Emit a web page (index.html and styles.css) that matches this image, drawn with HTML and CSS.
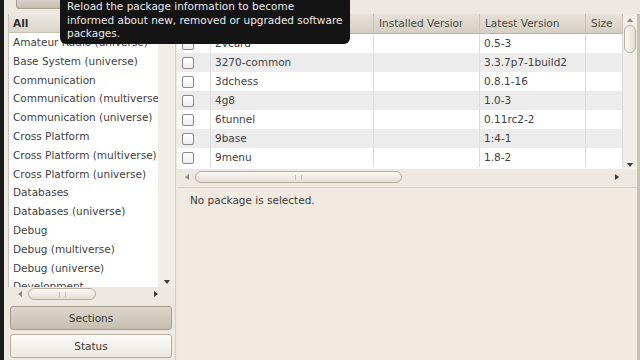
FILE: index.html
```html
<!DOCTYPE html>
<html lang="en">
<head>
    <meta charset="UTF-8">
    <title>Synaptic Package Manager</title>
    <link rel="stylesheet" href="styles.css">
</head>
<body>
    <div class="edge"></div>

    <div class="content">
        <div class="toolbar">
            <div class="tool-button"></div>
        </div>

        <div class="panes">
            <!-- левая панель: разделы -->
            <div class="left">
                <div class="section-box">
                    <div class="section-top">
                        <div class="section-list">
                            <div class="list-head">All</div>
                            <div class="list-row">Amateur Radio (universe)</div>
                            <div class="list-row">Base System (universe)</div>
                            <div class="list-row">Communication</div>
                            <div class="list-row">Communication (multiverse)</div>
                            <div class="list-row">Communication (universe)</div>
                            <div class="list-row">Cross Platform</div>
                            <div class="list-row">Cross Platform (multiverse)</div>
                            <div class="list-row">Cross Platform (universe)</div>
                            <div class="list-row">Databases</div>
                            <div class="list-row">Databases (universe)</div>
                            <div class="list-row">Debug</div>
                            <div class="list-row">Debug (multiverse)</div>
                            <div class="list-row">Debug (universe)</div>
                            <div class="list-row">Development</div>
                        </div>
                        <div class="vscroll left-vscroll">
                            <div class="vthumb"></div>
                            <span class="arrow-down"></span>
                        </div>
                    </div>
                    <div class="hscroll left-hscroll">
                        <span class="arrow-left"></span>
                        <div class="hthumb left-hthumb"><span class="grip"></span></div>
                        <span class="arrow-right"></span>
                    </div>
                </div>
                <button class="side-button pressed">Sections</button>
                <button class="side-button">Status</button>
            </div>

            <!-- правая панель: пакеты -->
            <div class="right">
                <div class="pkg-box">
                    <div class="pkg-table">
                        <div class="pkg-head">
                            <div class="hcell"></div>
                            <div class="hcell"><span class="hlabel">Package</span></div>
                            <div class="hcell"><span class="hlabel">Installed Version</span></div>
                            <div class="hcell"><span class="hlabel">Latest Version</span></div>
                            <div class="hcell"><span class="hlabel">Size</span></div>
                        </div>
                        <div class="pkg-row">
                            <div class="cell"><span class="check"></span></div>
                            <div class="cell">2vcard</div>
                            <div class="cell"></div>
                            <div class="cell">0.5-3</div>
                            <div class="cell"></div>
                        </div>
                        <div class="pkg-row odd">
                            <div class="cell"><span class="check"></span></div>
                            <div class="cell">3270-common</div>
                            <div class="cell"></div>
                            <div class="cell">3.3.7p7-1build2</div>
                            <div class="cell"></div>
                        </div>
                        <div class="pkg-row">
                            <div class="cell"><span class="check"></span></div>
                            <div class="cell">3dchess</div>
                            <div class="cell"></div>
                            <div class="cell">0.8.1-16</div>
                            <div class="cell"></div>
                        </div>
                        <div class="pkg-row odd">
                            <div class="cell"><span class="check"></span></div>
                            <div class="cell">4g8</div>
                            <div class="cell"></div>
                            <div class="cell">1.0-3</div>
                            <div class="cell"></div>
                        </div>
                        <div class="pkg-row">
                            <div class="cell"><span class="check"></span></div>
                            <div class="cell">6tunnel</div>
                            <div class="cell"></div>
                            <div class="cell">0.11rc2-2</div>
                            <div class="cell"></div>
                        </div>
                        <div class="pkg-row odd">
                            <div class="cell"><span class="check"></span></div>
                            <div class="cell">9base</div>
                            <div class="cell"></div>
                            <div class="cell">1:4-1</div>
                            <div class="cell"></div>
                        </div>
                        <div class="pkg-row">
                            <div class="cell"><span class="check"></span></div>
                            <div class="cell">9menu</div>
                            <div class="cell"></div>
                            <div class="cell">1.8-2</div>
                            <div class="cell"></div>
                        </div>
                    </div>
                    <div class="vscroll pkg-vscroll">
                        <span class="arrow-up"></span>
                        <div class="vthumb"></div>
                        <span class="arrow-down"></span>
                    </div>
                </div>
                <div class="hscroll pkg-hscroll">
                    <span class="arrow-left"></span>
                    <div class="hthumb pkg-hthumb"><span class="grip"></span></div>
                    <span class="arrow-right"></span>
                </div>
                <div class="details">No package is selected.</div>
            </div>

            <div class="right-edge"></div>
        </div>
    </div>

    <!-- подсказка поверх окна -->
    <div class="tooltip">Reload the package information to become<br>informed about new, removed or upgraded software<br>packages.</div>
</body>
</html>
```

FILE: styles.css
```css
body {
    margin: 0;
    width: 640px;
    height: 360px;
    overflow: hidden;
    display: flex;
    background: #ede8e0;
    font-family: "DejaVu Sans", sans-serif;
    font-size: 10.5px;
    color: #3f3f3f;
    position: relative;
}
.edge {
    width: 4px;
    flex-shrink: 0;
    background: #1c1b19;
}
.content {
    flex: 1;
    min-width: 0;
    display: flex;
    flex-direction: column;
}
.toolbar {
    height: 14px;
    padding-left: 12px;
}
.tool-button {
    width: 52px;
    height: 8px;
    background: linear-gradient(#d8d2c7, #c4bdb0);
    border: 1px solid #a9a192;
    border-top: none;
    border-radius: 0 0 3px 3px;
}
.panes {
    flex: 1;
    display: flex;
}
.left {
    width: 167px;
    flex-shrink: 0;
    padding-left: 4px;
    display: flex;
    flex-direction: column;
    border-right: 1px solid #d6cfc3;
}
.section-box {
    display: flex;
    flex-direction: column;
    height: 287px;
}
.section-top {
    flex: 1;
    display: flex;
    overflow: hidden;
}
.section-list {
    width: 149px;
    flex-shrink: 0;
    background: #fff;
    overflow: hidden;
    border-left: 1px solid #c9c2b6;
}
.list-head {
    height: 18px;
    line-height: 18px;
    padding-left: 4px;
    font-weight: bold;
    color: #2e2e2e;
    background: linear-gradient(#ece8e1, #dcd6cb);
    border-bottom: 1px solid #c9c2b5;
}
.list-row {
    height: 18.8px;
    line-height: 18.8px;
    padding-left: 4px;
    white-space: nowrap;
}
.vscroll {
    width: 15px;
    flex-shrink: 0;
    background: #f1ede7;
    display: flex;
    flex-direction: column;
    align-items: center;
}
.left-vscroll {
    width: 17px;
    padding-top: 3px;
}
.vthumb {
    width: 10px;
    height: 22px;
    border: 1px solid #b7ae9f;
    border-radius: 6px;
    background: linear-gradient(90deg, #fbf9f6, #e4ded3);
}
.arrow-down,
.arrow-up,
.arrow-left,
.arrow-right {
    width: 0;
    height: 0;
    border: 3px solid transparent;
}
.arrow-down {
    border-top: 4px solid #3a3a3a;
    border-bottom: none;
    margin-top: auto;
    margin-bottom: 3px;
}
.arrow-up {
    border-bottom: 4px solid #8c877f;
    border-top: none;
    margin: 4px 0 3px;
}
.arrow-left {
    border-right: 4px solid #8c877f;
    border-left: none;
}
.arrow-right {
    border-left: 4px solid #3a3a3a;
    border-right: none;
    margin-left: auto;
}
.hscroll {
    height: 14px;
    display: flex;
    align-items: center;
    padding: 0 5px;
    gap: 6px;
}
.hthumb {
    height: 10px;
    border: 1px solid #b7ae9f;
    border-radius: 6px;
    background: linear-gradient(#fbf9f6, #e4ded3);
    display: flex;
    justify-content: center;
    align-items: center;
}
.left-hthumb {
    width: 66px;
}
.grip {
    width: 5px;
    height: 5px;
    border-left: 1px solid #c8c0b3;
    border-right: 1px solid #c8c0b3;
}
.left-hscroll {
    width: 140px;
    padding-left: 10px;
}
.side-button {
    margin: 4px 0 0 2px;
    width: 162px;
    height: 24px;
    font-family: "DejaVu Sans", sans-serif;
    font-size: 10.5px;
    color: #3c3a36;
    border: 1px solid #b5ad9f;
    border-radius: 3px;
    background: linear-gradient(#fbfaf7, #ece7df);
    padding: 0;
}
.side-button.pressed {
    margin-top: 5px;
    background: linear-gradient(#ddd7cc, #c6bfb1);
    border-color: #a39b8c;
}
.right {
    flex: 1;
    min-width: 0;
    display: flex;
    flex-direction: column;
    padding-left: 1px;
}
.pkg-box {
    display: flex;
    height: 155px;
}
.pkg-table {
    flex: 1;
    min-width: 0;
    background: #fff;
    overflow: hidden;
}
.pkg-head,
.pkg-row {
    display: grid;
    grid-template-columns: 34px 163px 106px 106px 37px;
}
.pkg-head {
    height: 19px;
    background: linear-gradient(#e6e1d9, #d5cec2);
    border-bottom: 1px solid #bdb5a7;
}
.hcell {
    line-height: 19px;
    padding: 0 17px 0 5px;
    color: #4b4943;
    white-space: nowrap;
    overflow: hidden;
    border-right: 1px solid #cbc4b7;
}
.hcell:last-child {
    padding-right: 0;
}
.hlabel {
    display: block;
    overflow: hidden;
}
.pkg-row {
    height: 19px;
}
.pkg-row.odd {
    background: #ececec;
}
.cell {
    line-height: 19px;
    padding-left: 4px;
    border-right: 1px solid #dcdcdc;
    white-space: nowrap;
    display: flex;
    align-items: center;
}
.check {
    width: 10px;
    height: 10px;
    margin-left: 1px;
    border: 1px solid #8d8a85;
    border-radius: 2px;
    background: linear-gradient(#ffffff, #eeeeee);
}
.pkg-vscroll {
    width: 14px;
}
.pkg-vscroll .vthumb {
    height: 26px;
}
.pkg-vscroll .arrow-down {
    margin-bottom: 2px;
}
.pkg-hscroll {
    height: 16px;
    padding-left: 8px;
    padding-right: 18px;
}
.pkg-hthumb {
    width: 205px;
}
.details {
    flex: 1;
    margin-top: 2px;
    padding: 6px 13px;
    background: #f1eae0;
    border-top: 1px solid #d8d0c3;
    color: #3d3b37;
}
.right-edge {
    width: 3px;
    flex-shrink: 0;
    background: #c9c2b7;
}
.tooltip {
    position: absolute;
    left: 60px;
    top: 0;
    width: 277px;
    padding: 0 6px 3px 7px;
    background: #141414;
    border-radius: 0 0 6px 6px;
    color: #ebebeb;
    font-size: 10.5px;
    line-height: 13.7px;
    white-space: nowrap;
}
```
